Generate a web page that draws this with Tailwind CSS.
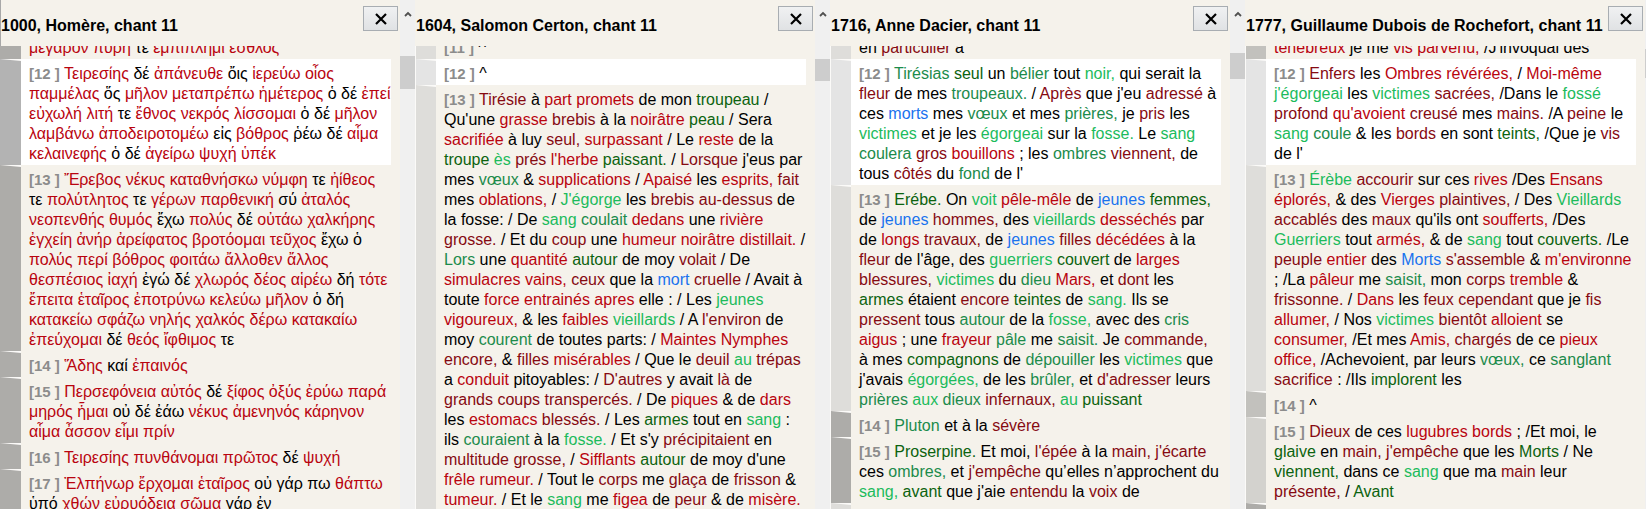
<!DOCTYPE html>
<html lang="fr">
<head>
<meta charset="utf-8">
<title>Odyssée, chant 11 : traductions comparées</title>
<script src="https://cdn.jsdelivr.net/npm/@tailwindcss/browser@4"></script>
</head>
<body class="bg-[#f5f2eb] text-black text-base leading-5 font-['Liberation_Sans',Arial,sans-serif]">
<main id="columns" class="flex h-screen overflow-hidden"></main>

<template id="column">
  <section class="group flex flex-1 min-w-0 flex-col">
    <header class="flex h-[46px] shrink-0 items-start justify-between border-l border-transparent pr-[2px] pt-[6px] group-first:border-[#a8a8a8]">
      <h2 class="whitespace-nowrap pt-[10px] font-bold"></h2>
      <button type="button" aria-label="Fermer" class="flex h-[25px] w-[35px] shrink-0 items-center justify-center border border-[#a8adb2] bg-linear-to-b from-[#f0f1f2] to-[#e0e2e4]">
        <svg class="mt-px size-3" viewBox="0 0 12 12" fill="none" stroke="#000" stroke-width="2.2"><path d="M1 1L11 11M11 1L1 11"/></svg>
      </button>
    </header>
    <div class="min-h-0 flex-1 overflow-hidden"><div data-body class="-mt-[13px]"></div></div>
  </section>
</template>

<template id="bar">
  <div class="flex w-[15px] shrink-0 flex-col bg-[#f0f0f0]">
    <div class="flex h-[28px] shrink-0 items-center justify-center">
      <svg class="size-2" viewBox="0 0 8 8" fill="none" stroke="#505050" stroke-width="1.8"><path d="M1 6L4 3L7 6"/></svg>
    </div>
    <div data-thumb class="shrink-0 bg-[#cdcdcd]"></div>
  </div>
</template>

<script>
// A mark in front of a word gives the colour of its match with the other versions.
const tones = {
  '*': 'text-[#b9040f]',
  '+': 'text-[#860a12]',
  '%': 'text-[#0c630f]',
  '=': 'text-[#1c8b4b]',
  '@': 'text-[#1cbb5c]',
  '#': 'text-[#1a72ee]'
};
const gutters = {
  dark: 'bg-[#adaca9]',
  mid: 'bg-[#c2c1bd]',
  soft: 'bg-[#d3d2ce]',
  pale: 'bg-[#dedddA]',
  day: 'bg-[#e4e4e4]',
  dusk: 'bg-[#b3b3b3]'
};
const columns = [
  { title: '1000, Homère, chant 11', thumb: [28, 33], verses: [
    ['', 'dark', `*μέγαρον *πυρή τε *ἐμπίπλημι *ἐσθλός`],
    [12, 'dusk', `*Τειρεσίης δέ *ἀπάνευθε ὄις *ἱερεύω *οἶος
*παμμέλας ὅς *μῆλον *μεταπρέπω *ἡμέτερος ὁ δέ *ἐπεί
*εὐχωλή *λιτή τε *ἔθνος *νεκρός *λίσσομαι ὁ δέ *μῆλον
*λαμβάνω *ἀποδειροτομέω εἰς *βόθρος ῥέω δέ *αἷμα
*κελαινεφής ὁ δέ *ἀγείρω *ψυχή *ὑπέκ`],
    [13, 'dark', `*Ἔρεβος *νέκυς *καταθνήσκω *νύμφη τε *ἠίθεος
τε *πολύτλητος τε *γέρων *παρθενική σύ *ἀταλός
*νεοπενθής *θυμός ἔχω *πολύς δέ *οὐτάω *χαλκήρης
*ἐγχείη *ἀνήρ *ἀρείφατος *βροτόομαι *τεῦχος ἔχω ὁ
*πολύς *περί *βόθρος *φοιτάω *ἄλλοθεν *ἄλλος
*θεσπέσιος *ἰαχή ἐγώ δέ *χλωρός *δέος *αἱρέω δή *τότε
*ἔπειτα *ἑταῖρος *ἐποτρύνω *κελεύω *μῆλον ὁ δή
*κατακείω *σφάζω *νηλής *χαλκός *δέρω *κατακαίω
*ἐπεύχομαι δέ *θεός *ἴφθιμος τε`],
    [14, 'dark', `*Ἅδης καί *ἐπαινός`],
    [15, 'dark', `*Περσεφόνεια *αὐτός δέ *ξίφος *ὀξύς *ἐρύω *παρά
*μηρός *ἧμαι οὐ δέ ἐάω *νέκυς *ἀμενηνός *κάρηνον
*αἷμα *ἆσσον *εἶμι *πρίν`],
    [16, 'dark', `*Τειρεσίης *πυνθάνομαι *πρῶτος δέ *ψυχή`],
    [17, 'dark', `*Ἐλπήνωρ *ἔρχομαι *ἑταῖρος οὐ γάρ πω *θάπτω
ὑπό *χθών *εὐρυόδεια *σῶμα γάρ ἐν`]
  ]},
  { title: '1604, Salomon Certon, chant 11', thumb: [31, 22], verses: [
    [11, 'pale', `^`],
    [12, 'day', `^`],
    [13, 'pale', `+Tirésie à *part *promets de mon %troupeau /
Qu'une *grasse +brebis à la *noirâtre %peau / Sera
*sacrifiée à luy +seul, *surpassant / Le *reste de la
%troupe @ès +prés *l'herbe %paissant. / +Lorsque j'eus par
mes =vœux & *supplications / *Apaisé les *esprits, +fait
mes *oblations, / @J'égorge les +brebis +au-dessus de
la fosse: / De @sang =coulait *dedans une *rivière
+grosse. / Et du +coup une *humeur *noirâtre *distillait. /
=Lors une *quantité %autour de moy +volait / De
*simulacres *vains, +ceux que la #mort +cruelle / Avait à
toute *force *entrainés *apres elle : / Les @jeunes
*vigoureux, & les *faibles @vieillards / A +l'environ de
moy =courent de toutes parts: / *Maintes *Nymphes
+encore, & +filles *misérables / Que le +deuil @au +trépas
a *conduit pitoyables: / +D'autres y avait +là de
+grands +coups +transpercés. / De *piques & de *dars
les *estomacs +blessés. / Les %armes tout en @sang :
ils =couraient à la @fosse. / Et s'y +précipitaient en
+multitude +grosse, / *Sifflants %autour de moy d'une
*frêle *rumeur. / Tout le +corps me +glaça de +frisson &
*tumeur. / Et le @sang me *figea de +peur & de *misère.`]
  ]},
  { title: '1716, Anne Dacier, chant 11', thumb: [25, 26], verses: [
    ['', 'pale', `en +particulier a`],
    [12, 'day', `=Tirésias %seul un =bélier tout @noir, qui serait la
+fleur de mes =troupeaux. / +Après que j'eu +adressé à
ces #morts mes =vœux et mes =prières, je +pris les
@victimes et je les @égorgeai sur la @fosse. Le @sang
=coulera +gros *bouillons ; les =ombres +viennent, de
tous +côtés du =fond de l'`],
    [13, 'pale', `%Erébe. On @voit *pêle-mêle de #jeunes %femmes,
de #jeunes +hommes, des @vieillards *desséchés par
de *longs +travaux, de #jeunes +filles *décédées à la
+fleur de l'âge, des @guerriers %couvert de *larges
+blessures, @victimes du =dieu *Mars, et +dont les
%armes étaient +encore %teintes de @sang. Ils se
+pressent tous =autour de la @fosse, avec des =cris
*aigus ; une *frayeur =pâle me =saisit. Je +commande,
à mes %compagnons de =dépouiller les @victimes que
j'avais @égorgées, de les =brûler, et +d'adresser leurs
=prières @aux =dieux +infernaux, @au %puissant`],
    [14, 'dark', `=Pluton et à la +sévère`],
    [15, 'dark', `%Proserpine. Et moi, +l'épée à la +main, +j'écarte
ces =ombres, et +j'empêche qu’elles n’approchent du
@sang, %avant que j'aie +entendu la +voix de`],
    ['', 'pale', ``]
  ]},
  { title: '1777, Guillaume Dubois de Rochefort, chant 11', thumb: [21, 29], last: true, verses: [
    ['', 'mid', `*ténébreux je me *vis *parvenu, /J'invoquai des`],
    [12, 'day', `+Enfers les *Ombres *révérées, / *Moi-même
@j'égorgeai les @victimes +sacrées, /Dans le @fossé
+profond *qu'avoient +creusé mes +mains. /A +peine le
@sang =coule & les +bords en sont %teints, /Que je +vis
de l'`],
    [13, 'pale', `@Érèbe +accourir sur ces *rives /Des *Ensans
*éplorés, & des *Vierges +plaintives, / Des @Vieillards
+accablés des +maux qu'ils ont *soufferts, /Des
@Guerriers tout *armés, & de @sang tout %couverts. /Le
+peuple *entier des #Morts +s'assemble & *m'environne
; /La *pâleur me =saisit, mon +corps *tremble &
+frissonne. / *Dans les +feux +cependant que je +fis
*allumer, / Nos @victimes +bientôt *alloient se
*consumer, /Et mes *Amis, +chargés de ce *pieux
*office, /Achevoient, par leurs =vœux, ce =sanglant
+sacrifice : /Ils %implorent les`],
    [14, 'mid', `^`],
    [15, 'soft', `+Dieux de ces *lugubres *bords ; /Et moi, le
%glaive en +main, +j'empêche que les %Morts / Ne
%viennent, dans ce @sang que ma +main leur
+présente, / %Avant`],
    ['', 'dark', ``]
  ]}
];

function el(tag, cls, text) {
  const n = document.createElement(tag);
  n.className = cls;
  if (text) n.textContent = text;
  return n;
}

function verse([num, shade, text]) {
  const row = el('div', 'flex');
  const gutter = el('div', 'flex w-[21px] shrink-0 bg-[#fbfaf8] pl-px group-first:pl-0');
  gutter.append(el('div', gutters[shade] + ' flex-1 [clip-path:polygon(0_0,100%_2px,100%_100%,0_100%)]'));
  const p = el('p', 'mr-[9px] min-h-[26px] min-w-0 flex-1 whitespace-pre pl-2 pt-[5px] pb-px' + (num === 12 ? ' bg-white' : ''));
  if (num) p.append(el('b', 'text-[15px] text-[#8c8c8c]', `[${num} ]`), ' ');
  for (const part of text.split(/(\s+)/)) {
    const tone = tones[part[0]];
    p.append(tone ? el('span', tone, part.slice(1)) : part);
  }
  row.append(gutter, p);
  return row;
}

const main = document.getElementById('columns');
for (const c of columns) {
  const col = document.getElementById('column').content.cloneNode(true);
  col.querySelector('h2').textContent = c.title;
  col.querySelector('[data-body]').append(...c.verses.map(verse));
  const bar = document.getElementById('bar').content.cloneNode(true);
  const thumb = bar.querySelector('[data-thumb]');
  thumb.style.marginTop = c.thumb[0] + 'px';
  thumb.style.height = c.thumb[1] + 'px';
  if (c.last) {
    bar.firstElementChild.classList.replace('w-[15px]', 'w-px');
    bar.querySelector('svg').remove();
  }
  main.append(col, bar);
}
</script>
</body>
</html>
